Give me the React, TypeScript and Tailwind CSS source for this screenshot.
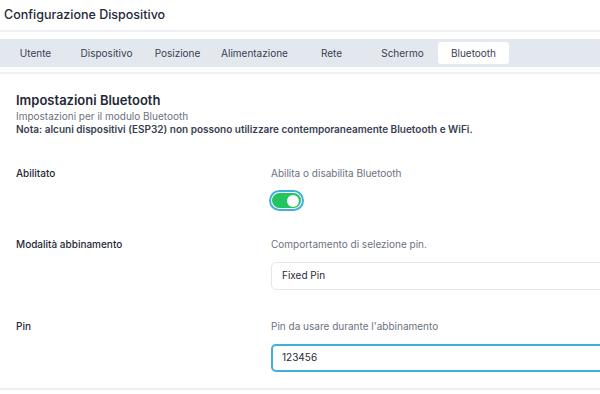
const tabs = [
  { label: "Utente", w: "w-[71px]" },
  { label: "Dispositivo", w: "w-[71px]" },
  { label: "Posizione", w: "w-[71px]" },
  { label: "Alimentazione", w: "w-[83px]" },
  { label: "Rete", w: "w-[71px]" },
  { label: "Schermo", w: "w-[71px]" },
  { label: "Bluetooth", w: "w-[71px]", active: true },
];

const Row = ({
  label,
  hint,
  className,
  children,
}: {
  label: string;
  hint: string;
  className: string;
  children: React.ReactNode;
}) => (
  <div className={`grid grid-cols-[255px_1fr] ${className}`}>
    <p className="text-[10px] font-medium leading-[14px] text-[#1f2937]">{label}</p>
    <div>
      <p className="text-[10px] leading-[14px] text-[#6b7280]">{hint}</p>
      {children}
    </div>
  </div>
);

export default function App() {
  return (
    <div className="h-[394px] w-[600px] overflow-hidden bg-white font-['Inter',sans-serif]">
      <div className="flex h-[32px] items-center border-b-2 border-[#eef0f3] px-1">
        <h1 className="text-[12.5px] font-medium text-[#1f2937]">Configurazione Dispositivo</h1>
      </div>
      <div className="mt-[7px] flex h-[28px] items-center bg-[#e3e8ef] py-[3px]">
        {tabs.map((t) => (
          <div
            key={t.label}
            className={`flex h-[22px] shrink-0 items-center justify-center text-[10px] text-[#374151] ${t.w} ${
              t.active ? "rounded-[3px] bg-white" : ""
            }`}
          >
            {t.label}
          </div>
        ))}
      </div>
      <div className="mt-[5px] h-[2px] bg-[#eef0f3]" />

      <div className="w-[760px] px-4 pt-[17px]">
        <h2 className="text-[13px] font-semibold leading-[18px] text-[#1f2937]">Impostazioni Bluetooth</h2>
        <p className="mt-[1px] text-[10px] leading-[13px] text-[#6b7280]">Impostazioni per il modulo Bluetooth</p>
        <p className="text-[10px] font-semibold leading-[13px] text-[#374151]">
          Nota: alcuni dispositivi (ESP32) non possono utilizzare contemporaneamente Bluetooth e WiFi.
        </p>

        <Row className="mt-[30px]" label="Abilitato" hint="Abilita o disabilita Bluetooth">
          <div className="ml-[-2px] mt-[10px] inline-flex rounded-full border-2 border-[#3fb0dc] p-[1px]">
            <div className="flex h-[15px] w-[29px] items-center justify-end rounded-full bg-[#22c55e] px-[2px]">
              <div className="h-[12px] w-[12px] rounded-full bg-white" />
            </div>
          </div>
        </Row>
        <Row className="mt-[24px]" label="Modalità abbinamento" hint="Comportamento di selezione pin.">
          <div className="mt-[11px] flex h-[28px] items-center rounded-[5px] border border-[#e5e7eb] px-[10px] text-[10px] text-[#1f2937]">
            Fixed Pin
          </div>
        </Row>
        <Row className="mt-[29px]" label="Pin" hint="Pin da usare durante l'abbinamento">
          <div className="mt-[11px] flex h-[28px] items-center rounded-[5px] border-2 border-[#3fb0dc] px-[9px] text-[10px] text-[#1f2937]">
            123456
          </div>
        </Row>
      </div>
      <div className="mt-[16px] h-[2px] bg-[#eef0f3]" />
    </div>
  );
}
